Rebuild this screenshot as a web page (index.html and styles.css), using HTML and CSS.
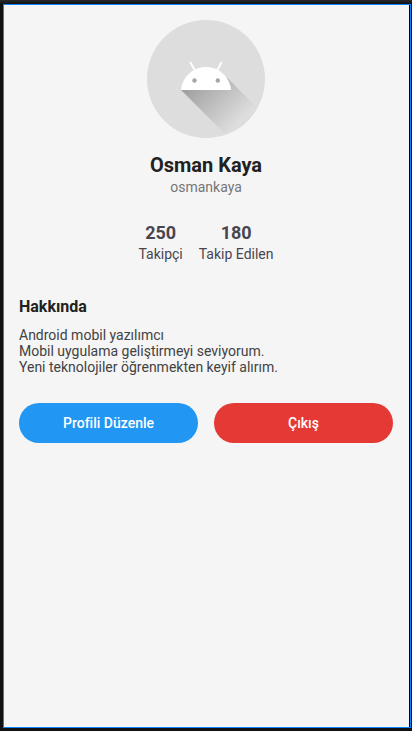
FILE: index.html
```html
<!DOCTYPE html>
<html lang="tr">
<head>
<meta charset="utf-8">
<meta name="viewport" content="width=device-width, initial-scale=1">
<title>Osman Kaya</title>
<link rel="stylesheet" href="styles.css">
</head>
<body>
<main class="screen">
  <header class="profile">
    <svg class="avatar" viewBox="0 0 118 118" aria-hidden="true">
      <defs>
        <linearGradient id="shade" gradientUnits="userSpaceOnUse" x1="48" y1="54" x2="94" y2="100">
          <stop offset="0" stop-color="#9c9c9c"/>
          <stop offset="1" stop-color="#dddddd"/>
        </linearGradient>
        <clipPath id="round"><circle cx="59" cy="59" r="59"/></clipPath>
      </defs>
      <circle cx="59" cy="59" r="59" fill="#dddddd"/>
      <path d="M34 70 L84 120 L130 108 L80 57.500 Z" fill="url(#shade)" clip-path="url(#round)"/>
      <path d="M34 70 C35 57 46 47 59 47 S83 57 84 70 Z" fill="#fff"/>
      <path d="M43.500 42.500 L48 50.500 M74.500 42.500 L70 50.500" stroke="#fff" stroke-width="1.800" stroke-linecap="round"/>
      <circle cx="47.500" cy="60.500" r="2.200" fill="#a6a6a6"/>
      <circle cx="70.800" cy="60.500" r="2.200" fill="#a6a6a6"/>
    </svg>
    <h1 class="name">Osman Kaya</h1>
    <p class="handle">osmankaya</p>
  </header>
  <dl class="stats">
    <div class="stat"><dt>Takipçi</dt><dd>250</dd></div>
    <div class="stat"><dt>Takip Edilen</dt><dd>180</dd></div>
  </dl>
  <section class="about">
    <h2>Hakkında</h2>
    <p>Android mobil yazılımcı<br>Mobil uygulama geliştirmeyi seviyorum.<br>Yeni teknolojiler öğrenmekten keyif alırım.</p>
  </section>
  <div class="actions">
    <button class="edit" type="button">Profili Düzenle</button>
    <button class="logout" type="button">Çıkış</button>
  </div>
</main>
</body>
</html>
```
FILE: styles.css
```css
* {
  box-sizing: border-box;
  margin: 0;
}

body {
  display: flex;
  min-height: 100vh;
  padding: 4px 1px 3px 3px;
  background: linear-gradient(#2a2b2d, #101112 4px, #101112);
  font: 14px/16px Roboto, sans-serif;
  color: #424242;
}

.screen {
  flex: 1;
  padding: 15px 17px 16px 15px;
  border: 1px solid #0a84ff;
  background: #f5f5f5;
  box-shadow: inset -1px 0 #000;
}

.profile {
  display: flex;
  flex-direction: column;
  align-items: center;
}

.avatar {
  width: 118px;
  height: 118px;
}

.name {
  margin-top: 15px;
  font-size: 20px;
  line-height: 24px;
  color: #212121;
}

.handle {
  margin-top: 2px;
  color: #757575;
}

.stats {
  display: flex;
  justify-content: center;
  gap: 16px;
  margin-top: 28px;
  color: #49454f;
  text-align: center;
}

.stat {
  display: flex;
  flex-direction: column-reverse;
  gap: 3px;
}

.stat dd {
  font-size: 18px;
  line-height: 20px;
  font-weight: 700;
}

.about {
  margin-top: 35px;
}

.about h2 {
  margin-bottom: 10px;
  font-size: 16px;
  line-height: 20px;
  color: #212121;
}

.actions {
  display: grid;
  grid-template-columns: 1fr 1fr;
  gap: 16px;
  margin-top: 28px;
}

button {
  height: 40px;
  border: 0;
  border-radius: 20px;
  font: 500 14px/20px Roboto, sans-serif;
  color: #fff;
}

.edit {
  background: #2196f3;
}

.logout {
  background: #e53935;
}
```
